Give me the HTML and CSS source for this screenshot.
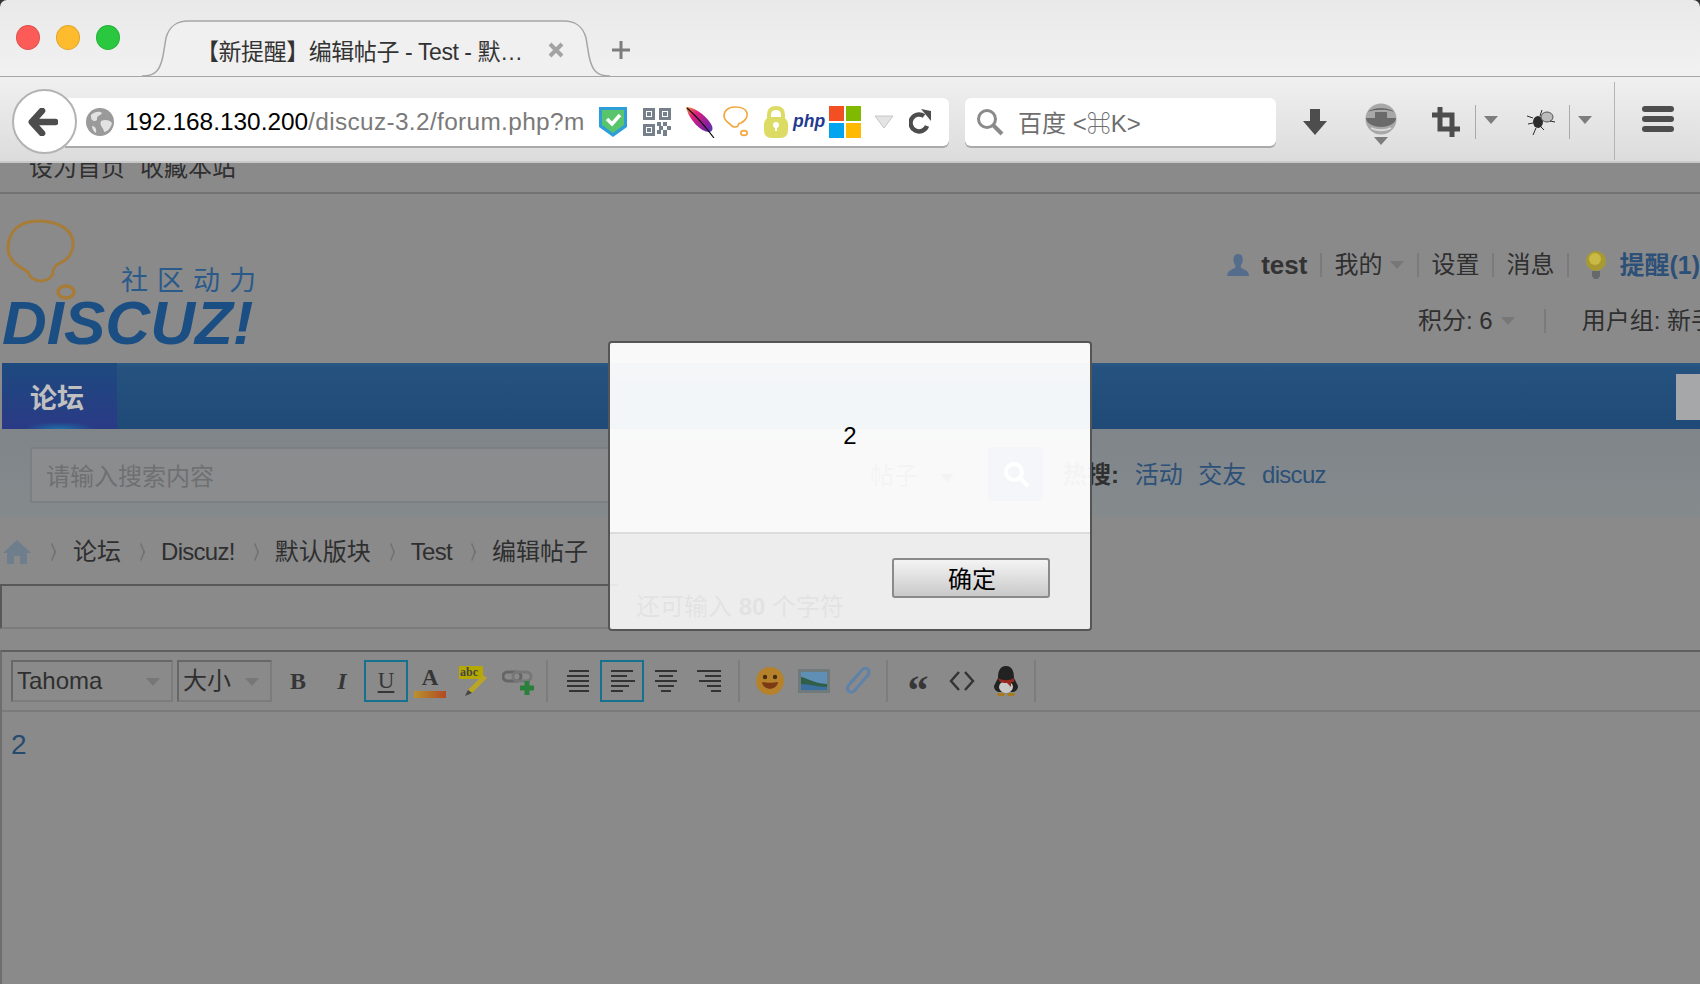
FILE: index.html
```html
<!DOCTYPE html>
<html lang="en">
<head>
<meta charset="UTF-8">
<meta name="viewport" content="width=device-width, initial-scale=1.0">
<title>编辑帖子 - Test</title>
<link rel="stylesheet" href="styles.css">
</head>
<body>

<div class="browser">
    <!-- tab strip -->
    <div class="tabstrip">
        <div class="lights">
            <span class="light red"></span>
            <span class="light yellow"></span>
            <span class="light green"></span>
        </div>
        <div class="tab">
            <svg class="tab-shape" width="468" height="57" viewBox="0 0 468 57">
                <path d="M0 56C14 56 18 50 21 36L24 18C27 6 36 1 46 1L422 1C432 1 441 6 444 18L447 36C450 50 454 56 468 56" fill="#f0f0f0" stroke="#a6a6a6" stroke-width="1.5"/>
            </svg>
            <span class="tab-title">【新提醒】编辑帖子 - Test - 默…</span>
            <svg class="tab-close" width="16" height="16" viewBox="0 0 16 16"><path d="M2 2L14 14M14 2L2 14" stroke="#a3a3a3" stroke-width="4"/></svg>
        </div>
        <svg class="tab-new" width="20" height="20" viewBox="0 0 20 20"><path d="M10 1V19M1 10H19" stroke="#7d7d7d" stroke-width="3"/></svg>
    </div>

    <!-- nav bar -->
    <div class="navbar">
        <div class="back">
            <svg width="30" height="28" viewBox="0 0 32 30"><path d="M15 3L4 15L15 27M5 15H29" fill="none" stroke="#4d4d4d" stroke-width="7" stroke-linejoin="round" stroke-linecap="round"/></svg>
        </div>
        <div class="urlbar">
            <svg class="ic-globe" width="28" height="28" viewBox="0 0 28 28">
                <circle cx="14" cy="14" r="14" fill="#9a9a9a"/>
                <path d="M5 7C9 3 14 3 16 5C14 8 12 7 11 10C12 13 8 14 6 12C5 11 5 9 5 7ZM15 13C19 11 24 12 26 15C25 20 21 24 18 24C18 20 13 18 15 13ZM6 18C9 18 11 21 10 25C8 24 6 21 6 18Z" fill="#e2e2e2"/>
            </svg>
            <span class="url"><b>192.168.130.200</b>/discuz-3.2/forum.php?m</span>
            <svg class="ic-shield" width="28" height="30" viewBox="0 0 28 30">
                <path d="M0 0H28V20L14 30L0 20Z" fill="#2d9ed8"/>
                <path d="M3 3H25V18L14 26L3 18Z" fill="#58c46c"/>
                <path d="M8 12L13 17L21 8" fill="none" stroke="#fff" stroke-width="3.5"/>
            </svg>
            <svg class="ic-qr" width="28" height="28" viewBox="0 0 28 28" fill="#75808a">
                <path d="M0 0H12V12H0ZM3 3V9H9V3ZM16 0H28V12H16ZM19 3V9H25V3ZM0 16H12V28H0ZM3 19V25H9V19Z" fill-rule="evenodd"/>
                <path d="M4 4H8V8H4ZM20 4H24V8H20ZM4 20H8V24H4ZM14 14H18V18H14ZM20 14H24V18H20ZM16 18H20V22H16ZM24 18H28V22H24ZM14 22H18V26H14ZM20 22H24V28H20Z"/>
            </svg>
            <svg class="ic-feather" width="30" height="32" viewBox="0 0 30 32">
                <defs><linearGradient id="fth" x1="0" y1="0" x2="1" y2="1"><stop offset="0" stop-color="#e8a030"/><stop offset=".3" stop-color="#e0207a"/><stop offset=".75" stop-color="#8a1fa0"/><stop offset="1" stop-color="#4f3fb0"/></linearGradient></defs>
                <path d="M1 1C8 1 19 7 26 18C29 23 27 26 24 26C16 26 4 14 1 1Z" fill="url(#fth)"/>
                <path d="M2 2C10 9 20 20 29 32" fill="none" stroke="#111" stroke-width="1.2"/>
            </svg>
            <svg class="ic-bubble" width="26" height="31" viewBox="0 0 26 31" fill="none" stroke="#f2a63c" stroke-width="1.6">
                <path d="M12 1C5 1 1 5 1 10C1 14 4 16 7 18C9 21 13 22 15 20C15 18 16 17 18 17C22 15 25 11 24 7C23 3 18 1 12 1Z"/>
                <ellipse cx="21" cy="27" rx="3.2" ry="2.4"/>
            </svg>
            <svg class="ic-lock" width="24" height="32" viewBox="0 0 24 32">
                <path d="M5 14V9C5 4 8 2 12 2C16 2 19 4 19 9V14" fill="none" stroke="#dcdc64" stroke-width="4"/>
                <rect y="11" width="24" height="21" rx="7" fill="#dcdc64"/>
                <circle cx="12" cy="19" r="3" fill="#fff"/>
                <rect x="11" y="19" width="2" height="6" fill="#fff"/>
            </svg>
            <span class="ic-php">php</span>
            <div class="ic-ms">
                <span class="ms-a"></span><span class="ms-b"></span><span class="ms-c"></span><span class="ms-d"></span>
            </div>
            <svg class="ic-drop" width="20" height="14" viewBox="0 0 20 14"><path d="M1 1H19L10 13Z" fill="#e4e4e4" stroke="#c6c6c6"/></svg>
            <svg class="ic-reload" width="22" height="25" viewBox="0 0 22 25">
                <path d="M18 17A8.5 8.5 0 1 1 15 7" fill="none" stroke="#4d4d4d" stroke-width="4.5"/>
                <path d="M12 0L22 2V12Z" fill="#4d4d4d"/>
            </svg>
        </div>
        <div class="searchbar">
            <svg width="28" height="28" viewBox="0 0 28 28" fill="none" stroke="#8a8a8a"><circle cx="11" cy="11" r="8.5" stroke-width="3"/><path d="M17 17L26 26" stroke-width="4"/></svg>
            <span class="searchbar-text">百度 &lt;⌘K&gt;</span>
        </div>
        <svg class="ic-down" width="24" height="26" viewBox="0 0 24 26" fill="#4d4d4d"><path d="M7 0H17V12H24L12 26L0 12H7Z"/></svg>
        <div class="ic-sync">
            <svg width="32" height="32" viewBox="0 0 32 32">
                <ellipse cx="16" cy="16" rx="15.5" ry="15.5" fill="#a8a8a8"/>
                <path d="M3 9C8 4 24 4 29 9C24 6 8 6 3 9Z" fill="#5e5e5e"/>
                <path d="M1 15H10V9H22V15H31C31 21 22 24 16 24C10 24 1 21 1 15Z" fill="#6a6a6a"/>
                <path d="M6 25C11 28 21 28 26 25" stroke="#dadada" stroke-width="2" fill="none"/>
            </svg>
            <span class="tri"></span>
        </div>
        <svg class="ic-crop" width="28" height="30" viewBox="0 0 28 30" fill="none" stroke="#4d4d4d" stroke-width="5"><path d="M0 8H20V30M8 0V22H28"/></svg>
        <span class="bar-sep"></span>
        <span class="tri tri-side"></span>
        <svg class="ic-bug" width="30" height="28" viewBox="0 0 30 28" stroke="#2b2b2b" fill="none">
            <ellipse cx="12" cy="14" rx="5" ry="6" fill="#2b2b2b" stroke="none"/>
            <ellipse cx="21" cy="9" rx="6" ry="5" fill="#bbb" stroke="#555"/>
            <path d="M7 10L1 8M7 15L2 16M10 20L7 27M15 19L18 22M14 8L16 2M24 13L29 14"/>
        </svg>
        <span class="bar-sep bar-sep-2"></span>
        <span class="tri tri-side"></span>
        <span class="bar-tall"></span>
        <div class="burger"><span></span><span></span><span></span></div>
    </div>
</div>

<div class="page">
    <div class="topbar">
        <a>设为首页</a>
        <a>收藏本站</a>
    </div>

    <div class="header">
        <div class="logo">
            <div class="logo-top">
                <svg width="71" height="82" viewBox="0 0 71 82" fill="none" stroke="#a67c38" stroke-width="3">
                    <path d="M32 2C14 2 2 12 2 29C2 42 14 48 22 53C25 64 42 65 47 55C46 49 50 46 54 44C64 40 68 31 67 22C65 9 50 2 32 2Z"/>
                    <ellipse cx="60" cy="73" rx="8" ry="6" stroke-width="3.5"/>
                </svg>
                <span class="logo-slogan">社区动力</span>
            </div>
            <div class="logo-name">DISCUZ!</div>
        </div>
        <div class="user-info">
            <div class="user-row">
                <svg width="24" height="24" viewBox="0 0 24 24" fill="#556d8c"><path d="M12 0C8 0 7 3 7 6C7 9 8 11 9 12V15C6 17 1 17 0 24H24C23 17 18 17 15 15V12C16 11 17 9 17 6C17 3 16 0 12 0Z"/></svg>
                <b class="user-name">test</b>
                <span class="sep"></span>
                <a>我的</a><span class="caret"></span>
                <span class="sep"></span>
                <a>设置</a>
                <span class="sep"></span>
                <a>消息</a>
                <span class="sep"></span>
                <svg class="bulb" width="20" height="28" viewBox="0 0 20 28">
                    <circle cx="10" cy="10" r="10" fill="#a89a30"/>
                    <circle cx="9" cy="8" r="6" fill="#c9ba45"/>
                    <path d="M6 20H14V25L12 28H8L6 25Z" fill="#66696c"/>
                </svg>
                <a class="remind">提醒(1)</a>
            </div>
            <div class="user-row user-row-2">
                <a>积分: 6</a><span class="caret"></span>
                <span class="sep sep-wide"></span>
                <a>用户组: 新手上路</a>
            </div>
        </div>
    </div>

    <div class="mainnav">
        <a class="mainnav-active">论坛</a>
        <span class="mainnav-box"></span>
    </div>

    <div class="searchband">
        <div class="search-input">请输入搜索内容</div>
        <div class="search-type">帖子<span class="caret"></span></div>
        <div class="search-btn">
            <svg width="26" height="26" viewBox="0 0 26 26" fill="none" stroke="#fff"><circle cx="11" cy="11" r="8" stroke-width="4"/><path d="M17 17L25 25" stroke-width="4"/></svg>
        </div>
        <div class="hot">
            <b>热搜:</b>
            <a>活动</a>
            <a>交友</a>
            <a class="lat">discuz</a>
        </div>
    </div>

    <div class="crumbs">
        <svg class="home" width="28" height="24" viewBox="0 0 28 24" fill="#6f7e8d"><path d="M14 0L28 13H24V24H17V16H11V24H4V13H0Z"/></svg>
        <span class="gt"></span>
        <a>论坛</a>
        <span class="gt"></span>
        <a class="lat">Discuz!</a>
        <span class="gt"></span>
        <a>默认版块</a>
        <span class="gt"></span>
        <a class="lat">Test</a>
        <span class="gt"></span>
        <a>编辑帖子</a>
    </div>

    <div class="title-row">
        <div class="title-input"></div>
        <div class="title-hint">还可输入 <b>80</b> 个字符</div>
    </div>

    <div class="editor">
        <div class="toolbar">
            <div class="select select-font">Tahoma<span class="caret"></span></div>
            <div class="select select-size">大小<span class="caret"></span></div>

            <div class="tb-group">
                <a class="tb t-b">B</a>
                <a class="tb t-i">I</a>
                <a class="tb t-u active">U</a>
                <a class="tb t-a">A<span class="a-bar"></span></a>
                <a class="tb">
                    <svg width="30" height="30" viewBox="0 0 30 30">
                        <rect width="24" height="13" fill="#b5a800"/>
                        <text x="1" y="10" class="abc">abc</text>
                        <path d="M28 12L13 27L9 24L24 9Z" fill="#b8a624"/>
                        <path d="M9 24L13 27L6 30Z" fill="#444"/>
                    </svg>
                </a>
                <a class="tb">
                    <svg width="32" height="28" viewBox="0 0 32 28" fill="none">
                        <rect x="1" y="5" width="18" height="9" rx="4.5" stroke="#666" stroke-width="3"/>
                        <rect x="11" y="5" width="18" height="9" rx="4.5" stroke="#777" stroke-width="3"/>
                        <path d="M25 14V28M18 21H32" stroke="#2a7f3a" stroke-width="5"/>
                    </svg>
                </a>
            </div>
            <span class="tb-sep"></span>

            <div class="tb-group">
                <a class="tb"><svg width="26" height="24" viewBox="0 0 26 24" stroke="#333" stroke-width="2"><path d="M4 2H24M2 7H24M2 12H24M2 17H24M4 22H24"/></svg></a>
                <a class="tb active"><svg width="26" height="24" viewBox="0 0 26 24" stroke="#333" stroke-width="2"><path d="M2 2H24M2 7H18M2 12H26M2 17H20M2 22H14"/></svg></a>
                <a class="tb"><svg width="26" height="24" viewBox="0 0 26 24" stroke="#333" stroke-width="2"><path d="M2 2H24M6 7H20M2 12H24M5 17H21M8 22H18"/></svg></a>
                <a class="tb"><svg width="26" height="24" viewBox="0 0 26 24" stroke="#333" stroke-width="2"><path d="M0 2H24M8 7H24M2 12H24M10 17H24M14 22H24"/></svg></a>
            </div>
            <span class="tb-sep"></span>

            <div class="tb-group">
                <a class="tb">
                    <svg width="28" height="28" viewBox="0 0 28 28">
                        <circle cx="14" cy="14" r="14" fill="#b5812a"/>
                        <circle cx="9" cy="10" r="2.2" fill="#4a2c10"/><circle cx="19" cy="10" r="2.2" fill="#4a2c10"/>
                        <path d="M6 15C10 16 18 16 22 15C21 24 7 24 6 15Z" fill="#7a3a14"/>
                    </svg>
                </a>
                <a class="tb">
                    <svg width="32" height="24" viewBox="0 0 32 24">
                        <rect width="32" height="24" fill="#6e7a7c"/>
                        <rect x="3" y="3" width="26" height="18" fill="#5f8fb5"/>
                        <path d="M3 8C10 9 14 14 29 15V21H3Z" fill="#2f5f48"/>
                        <path d="M3 15C12 15 18 18 29 18V21H3Z" fill="#3a6f9f"/>
                    </svg>
                </a>
                <a class="tb">
                    <svg width="28" height="30" viewBox="0 0 28 30" fill="none"><path d="M7 16L18 4C22 0 27 4 24 9L11 24C8 28 2 26 4 20L14 9" stroke="#5f83a8" stroke-width="3" stroke-linecap="round"/></svg>
                </a>
            </div>
            <span class="tb-sep"></span>

            <div class="tb-group">
                <a class="tb t-q">“</a>
                <a class="tb"><svg width="26" height="22" viewBox="0 0 26 22" fill="none" stroke="#333" stroke-width="2.4"><path d="M10 2L2 11L10 20M16 2L24 11L16 20"/></svg></a>
                <a class="tb">
                    <svg width="28" height="30" viewBox="0 0 28 30">
                        <path d="M14 0C7 0 6 7 6 12L2 20C2 24 5 26 8 26H20C23 26 26 24 26 20L22 12C22 7 21 0 14 0Z" fill="#222"/>
                        <ellipse cx="14" cy="21" rx="7" ry="6" fill="#c8c8c8"/>
                        <path d="M6 12C11 15 17 15 22 12L22 16L19 16L19 21L15 17C12 17 7 17 6 12Z" fill="#9a2a20"/>
                        <path d="M5 27H13L12 30H6ZM15 27H23L22 30H16Z" fill="#a87a1e"/>
                    </svg>
                </a>
            </div>
            <span class="tb-sep"></span>
        </div>
        <div class="editor-body">2</div>
    </div>
</div>

<!-- alert box lies over the page -->
<div class="dialog">
    <div class="dialog-msg">2</div>
    <div class="dialog-foot">
        <button class="dialog-btn">确定</button>
    </div>
</div>

</body>
</html>
```

FILE: styles.css
```css
* {
    box-sizing: border-box;
}
html, body {
    margin: 0;
    height: 100%;
}
body {
    width: 1700px;
    height: 984px;
    overflow: hidden;
    background: #333;
    position: relative;
    font-family: "Liberation Sans", "Noto Sans CJK SC", sans-serif;
    color: #2f2f2f;
}

/* tab strip */
.browser {
    border-radius: 7px 7px 0 0;
    overflow: hidden;
}
.tabstrip {
    height: 77px;
    display: flex;
    background: linear-gradient(#e9e9e9, #f1f1f1);
    border-bottom: 1.5px solid #a6a6a6;
}
.lights {
    display: flex;
    gap: 16px;
    padding: 25px 0 0 16px;
    width: 142px;
}
.light {
    width: 24px;
    height: 25px;
    border-radius: 50%;
    border: 1px solid rgba(0,0,0,.12);
}
.red { background: #fc5b57; }
.yellow { background: #fdbb2d; }
.green { background: #29c83f; }
.tab {
    position: relative;
    width: 468px;
    height: 57px;
    margin-top: 20px;
    display: flex;
    align-items: center;
    padding: 2px 0 0 54px;
}
.tab-shape {
    position: absolute;
    left: 0;
    top: 0;
}
.tab-title {
    position: relative;
    width: 352px;
    font-size: 23px;
    letter-spacing: -.45px;
    white-space: nowrap;
    color: #333;
}
.tab-close {
    position: relative;
    margin-left: 0;
}
.tab-new {
    margin: 40px 0 0 1px;
}

/* nav bar */
.navbar {
    position: relative;
    height: 86px;
    display: flex;
    align-items: center;
    padding: 5px 0 0 65px;
    background: linear-gradient(#f0f0f0, #dcdcdc);
    border-bottom: 2px solid #c9c9c9;
}
.back {
    position: absolute;
    left: 12px;
    top: 12px;
    width: 65px;
    height: 65px;
    padding-right: 4px;
    border-radius: 50%;
    background: #fff;
    border: 2px solid #b3b3b3;
    display: flex;
    align-items: center;
    justify-content: center;
    z-index: 1;
}
.urlbar {
    width: 884px;
    height: 48px;
    padding-left: 21px;
    display: flex;
    align-items: center;
    background: #fff;
    border-radius: 0 6px 6px 0;
    box-shadow: 0 2px 0 #aaa;
    flex: none;
}
.url {
    width: 462px;
    margin-left: 11px;
    font-size: 24.4px;
    letter-spacing: .35px;
    white-space: nowrap;
    overflow: hidden;
    color: #7a7a7a;
    flex: none;
}
.url b {
    font-weight: normal;
    letter-spacing: 0;
    color: #000;
}
.ic-shield { margin-left: 12px; flex: none; }
.ic-qr { margin-left: 16px; flex: none; }
.ic-feather { margin-left: 14px; flex: none; }
.ic-bubble { margin-left: 8px; flex: none; }
.ic-lock { margin-left: 15px; flex: none; }
.ic-php {
    width: 32px;
    margin-left: 5px;
    font-size: 17.5px;
    font-weight: bold;
    font-style: italic;
    color: #1f3a8f;
    flex: none;
}
.ic-ms {
    width: 32px;
    height: 32px;
    margin-left: 4px;
    display: grid;
    grid-template-columns: 15px 15px;
    grid-template-rows: 15px 15px;
    gap: 2px;
    flex: none;
}
.ms-a { background: #f25022; }
.ms-b { background: #7fba00; }
.ms-c { background: #00a4ef; }
.ms-d { background: #ffb900; }
.ic-drop { margin-left: 13px; flex: none; }
.ic-reload { margin-left: 15px; flex: none; }
.searchbar {
    width: 311px;
    height: 48px;
    margin-left: 16px;
    padding-left: 11px;
    display: flex;
    align-items: center;
    background: #fff;
    border-radius: 6px;
    box-shadow: 0 2px 0 #aaa;
    flex: none;
}
.searchbar-text {
    margin-left: 14px;
    font-size: 24px;
    color: #6e6e6e;
}
.ic-down { margin-left: 27px; flex: none; }
.ic-sync {
    width: 32px;
    margin: -2px 0 0 38px;
    display: flex;
    flex-direction: column;
    align-items: center;
    gap: 2px;
    padding-top: 6px;
    flex: none;
}
.ic-crop { margin-left: 35px; flex: none; }
.tri {
    display: block;
    width: 0;
    height: 0;
    border-left: 7px solid transparent;
    border-right: 7px solid transparent;
    border-top: 8px solid #7d7d7d;
    flex: none;
}
.tri-side {
    margin: -4px 0 0 8px;
}
.bar-sep {
    width: 1px;
    height: 34px;
    margin-left: 15px;
    background: #aaa;
    flex: none;
}
.bar-sep-2 { margin-left: 13px; }
.ic-bug { margin-left: 28px; flex: none; }
.bar-tall {
    width: 1px;
    height: 78px;
    margin-left: 22px;
    align-self: flex-start;
    background: #b4b4b4;
    flex: none;
}
.burger {
    width: 32px;
    margin: -5px 0 0 27px;
    display: flex;
    flex-direction: column;
    gap: 4px;
    flex: none;
}
.burger span {
    height: 6px;
    border-radius: 3px;
    background: #4d4d4d;
}

/* dimmed page */
.page {
    height: 821px;
    overflow: hidden;
    background: #8a8a8b;
    font-size: 24px;
    line-height: 32px;
}
.topbar {
    height: 31px;
    padding-left: 29px;
    display: flex;
    gap: 15px;
    line-height: 10px;
    overflow: hidden;
    border-bottom: 2px solid #727373;
}
.header {
    height: 169px;
    display: flex;
}
.logo {
    width: 270px;
}
.logo-top {
    display: flex;
    align-items: flex-end;
    padding: 25px 0 0 6px;
}
.logo-slogan {
    margin: 0 0 6px 44px;
    font-size: 27px;
    letter-spacing: 9px;
    line-height: 28px;
    white-space: nowrap;
    color: #2a5a8a;
}
.logo-name {
    margin-top: -6px;
    padding-left: 2px;
    font-size: 62px;
    line-height: 56px;
    font-weight: bold;
    font-style: italic;
    color: #1b4f84;
    white-space: nowrap;
}
.user-info {
    width: 473px;
    margin-left: auto;
    padding-top: 53px;
    white-space: nowrap;
}
.user-row {
    height: 36px;
    display: flex;
    align-items: center;
}
.user-row-2 {
    margin-top: 20px;
    margin-left: 191px;
}
.user-name {
    margin-left: 12px;
    font-size: 26px;
    color: #333;
}
.sep {
    width: 2px;
    height: 24px;
    margin: 0 12.5px;
    background: #7a7b7c;
    flex: none;
}
.sep-wide {
    margin: 0 36px 0 29px;
}
.caret {
    display: inline-block;
    width: 0;
    height: 0;
    margin-left: 8px;
    border-left: 7px solid transparent;
    border-right: 7px solid transparent;
    border-top: 8px solid #767778;
    flex: none;
}
.bulb {
    margin-left: 5px;
    flex: none;
}
.remind {
    margin-left: 13px;
    font-size: 25px;
    font-weight: bold;
    color: #2d5078;
}

.mainnav {
    height: 66px;
    margin-left: 2px;
    display: flex;
    background: linear-gradient(#2b5984 0, #26527f 6%, #1f4a78 100%);
}
.mainnav-active {
    width: 115px;
    padding-left: 28px;
    font-size: 27px;
    font-weight: bold;
    line-height: 72px;
    color: #c0c0c0;
    background: radial-gradient(ellipse 36px 7px at 50% 100%, #1e6ea8, transparent), linear-gradient(#1d4a7f, #2a3a85);
}
.mainnav-box {
    width: 24px;
    height: 46px;
    margin: 11px 0 0 auto;
    background: #a6a7a8;
}

.searchband {
    height: 88px;
    padding: 18px 0 0 30px;
    display: flex;
    background: linear-gradient(#7f8589, #858a8d);
}
.search-input {
    width: 820px;
    height: 56px;
    padding: 0 14px;
    line-height: 56px;
    font-size: 24px;
    color: #6f7072;
    background: #8b8c8d;
    border: 2px solid #7b8084;
    border-right: 0;
}
.search-type {
    width: 122px;
    height: 56px;
    padding-left: 18px;
    line-height: 54px;
    background: #8b8c8d;
    border: 2px solid #7b8084;
    color: #222;
}
.search-type .caret {
    margin-left: 22px;
    vertical-align: middle;
    border-top-color: #222;
}
.search-btn {
    width: 55px;
    height: 54px;
    margin-left: 16px;
    display: flex;
    align-items: center;
    justify-content: center;
    background: #2a5a80;
    border-radius: 3px;
}
.hot {
    margin-left: 20px;
    line-height: 56px;
    white-space: nowrap;
}
.hot a {
    margin-left: 9px;
    color: #2d5078;
}

.crumbs {
    height: 67px;
    padding: 2px 0 0 3px;
    display: flex;
    align-items: center;
}
.lat {
    letter-spacing: -.7px;
}
.gt {
    width: 10px;
    height: 10px;
    margin: 0 15px;
    border-top: 2px solid #707172;
    border-right: 2px solid #707172;
    transform: scale(.55, 1.35) rotate(45deg);
    flex: none;
}
.home + .gt {
    margin: 0 16px;
}

.title-row {
    height: 45px;
    display: flex;
}
.title-input {
    width: 618px;
    border-top: 2px solid #585858;
    border-left: 2px solid #585858;
    border-bottom: 2px solid #7b7b7b;
}
.title-hint {
    margin-left: 18px;
    line-height: 45px;
    color: #222;
    white-space: nowrap;
}

.editor {
    min-height: 400px;
    margin-top: 21px;
    border-top: 2px solid #5f5f5f;
    border-left: 2px solid #6e6e6e;
}
.toolbar {
    height: 60px;
    padding: 8px 0 0 9px;
    display: flex;
    align-items: flex-start;
    border-bottom: 2px solid #7b7b7b;
}
.select {
    height: 42px;
    padding-left: 4px;
    display: flex;
    align-items: center;
    justify-content: space-between;
    line-height: 38px;
    border: 2px solid #7c7c7c;
    border-top-color: #676767;
    border-left-color: #676767;
    flex: none;
}
.select .caret {
    margin: 2px 11px 0 0;
}
.select-font { width: 162px; }
.select-size { width: 95px; margin-left: 4px; }
.tb-group {
    display: flex;
    margin-left: 4px;
}
.tb-sep + .tb-group {
    margin-left: 8px;
}
.tb {
    width: 44px;
    height: 42px;
    display: flex;
    align-items: center;
    justify-content: center;
    border: 2px solid transparent;
    color: #363636;
    flex: none;
}
.tb.active {
    border-color: #16708f;
}
.t-b {
    font-family: "Liberation Serif", serif;
    font-size: 24px;
    font-weight: bold;
}
.t-i {
    font-family: "Liberation Serif", serif;
    font-size: 24px;
    font-weight: bold;
    font-style: italic;
}
.t-u {
    font-family: "Liberation Serif", serif;
    font-size: 23px;
    text-decoration: underline;
    text-underline-offset: 3px;
}
.t-a {
    flex-direction: column;
    font-family: "Liberation Serif", serif;
    font-size: 23px;
    font-weight: bold;
    line-height: 26px;
}
.a-bar {
    width: 32px;
    height: 7px;
    background: linear-gradient(90deg, #b8912f, #b34a22);
}
.t-q {
    font-family: "Liberation Serif", serif;
    font-size: 42px;
    font-weight: bold;
    line-height: 56px;
    align-items: flex-start;
}
.abc {
    font-family: "Liberation Serif", serif;
    font-size: 12px;
    font-weight: bold;
    fill: #444;
}
.tb-sep {
    width: 2px;
    height: 42px;
    margin-left: 6px;
    background: #7c7d7d;
    flex: none;
}
.editor-body {
    padding: 15px 0 0 9px;
    font-size: 28px;
    line-height: 36px;
    color: #274b70;
}

/* alert box */
.dialog {
    position: absolute;
    left: 608px;
    top: 341px;
    width: 484px;
    height: 290px;
    display: flex;
    flex-direction: column;
    border: 2px solid #555;
    border-radius: 4px;
    overflow: hidden;
}
.dialog-msg {
    height: 189px;
    padding-top: 75px;
    font-size: 24px;
    line-height: 36px;
    text-align: center;
    color: #000;
    background: rgba(255,255,255,.95);
}
.dialog-foot {
    flex: 1;
    padding: 24px 40px 0 0;
    display: flex;
    justify-content: flex-end;
    align-items: flex-start;
    background: rgba(247,247,247,.9);
    border-top: 2px solid #dcdcdc;
}
.dialog-btn {
    width: 158px;
    height: 40px;
    padding: 0 0 5px 2px;
    font-family: "Liberation Sans", "Noto Sans CJK SC", sans-serif;
    font-size: 24px;
    color: #000;
    background: linear-gradient(#f4f4f4, #c9c9c9);
    border: 2px solid #8a8a8a;
    border-radius: 3px;
}
```
